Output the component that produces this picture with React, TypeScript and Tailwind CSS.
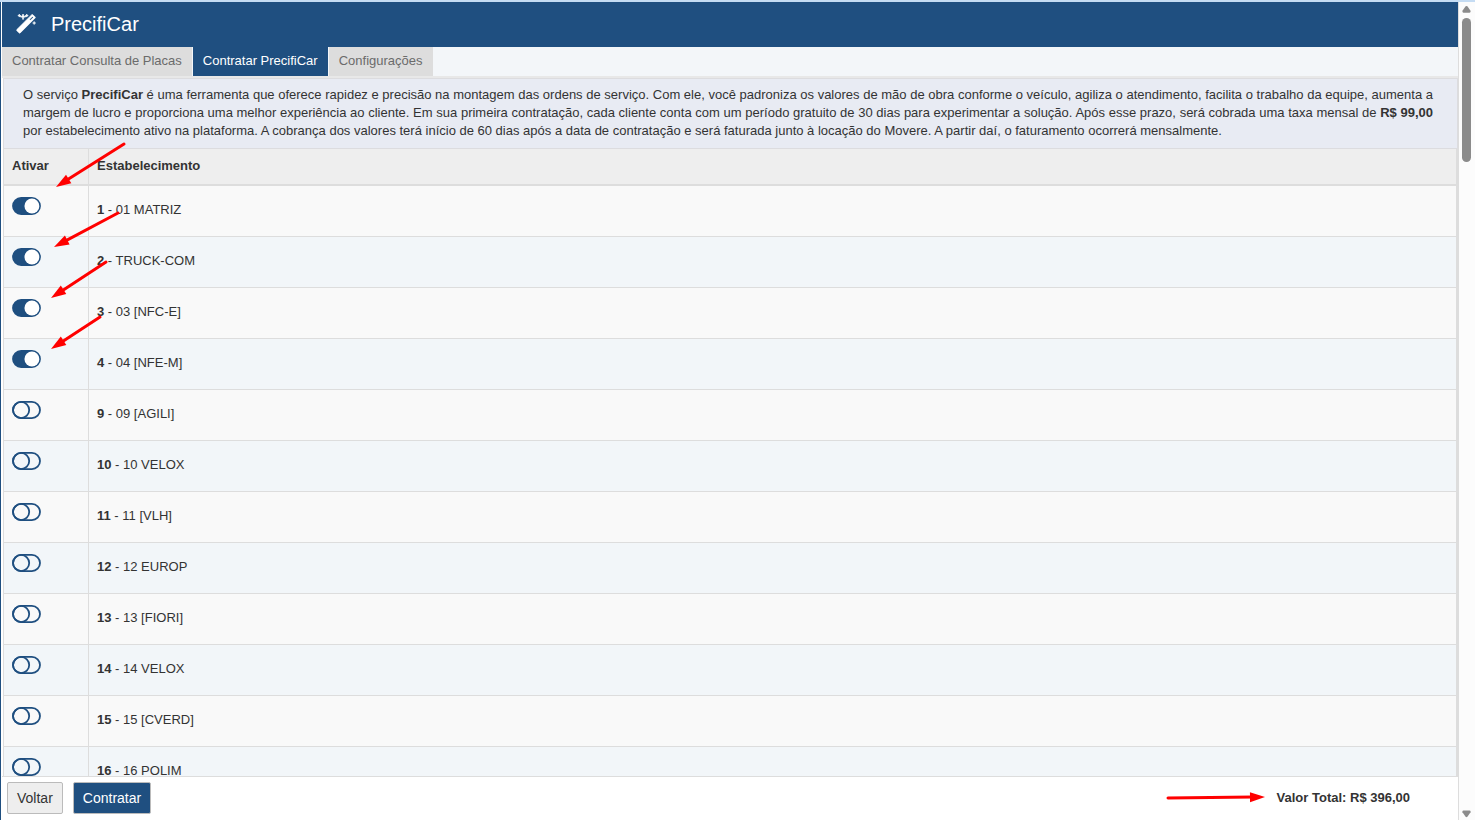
import { useState } from "react";

type Establishment = { id: number; name: string };

const establishments: Establishment[] = [
  { id: 1, name: "01 MATRIZ" },
  { id: 2, name: "TRUCK-COM" },
  { id: 3, name: "03 [NFC-E]" },
  { id: 4, name: "04 [NFE-M]" },
  { id: 9, name: "09 [AGILI]" },
  { id: 10, name: "10 VELOX" },
  { id: 11, name: "11 [VLH]" },
  { id: 12, name: "12 EUROP" },
  { id: 13, name: "13 [FIORI]" },
  { id: 14, name: "14 VELOX" },
  { id: 15, name: "15 [CVERD]" },
  { id: 16, name: "16 POLIM" },
];

const MONTHLY_FEE = 99;

function WandIcon() {
  return (
    <svg viewBox="-30 0 1724 1792" className="h-[21px] w-5 fill-white stroke-white" strokeWidth="60" aria-hidden="true">
      <path
        fillRule="evenodd"
        d="M1220 535l243-243-87-87-243 243zM1637 292q0 27-18 45l-1286 1286q-18 18-45 18t-45-18l-198-198q-18-18-18-45t18-45l1286-1286q18-18 45-18t45 18l198 198q18 18 18 45zM286 98l98 30-98 30-30 98-30-98-98-30 98-30 30-98zM636 160l196 60-196 60-60 196-60-196-196-60 196-60 60-196zM1566 738l98 30-98 30-30 98-30-98-98-30 98-30 30-98zM926 98l98 30-98 30-30 98-30-98-98-30 98-30 30-98z"
      />
    </svg>
  );
}

function ToggleIcon({ on }: { on: boolean }) {
  return (
    <svg viewBox="0 0 2048 1280" className="h-[18px] w-[29px]" aria-hidden="true">
      <rect x="64" y="64" width="1920" height="1152" rx="576" fill={on ? "#1f4f80" : "none"} stroke="#1f4f80" strokeWidth="128" />
      {on ? (
        <circle cx="1408" cy="640" r="530" fill="#ffffff" />
      ) : (
        <circle cx="640" cy="640" r="576" fill="none" stroke="#1f4f80" strokeWidth="128" />
      )}
    </svg>
  );
}

function Arrow({ x1, y1, x2, y2 }: { x1: number; y1: number; x2: number; y2: number }) {
  const length = Math.hypot(x2 - x1, y2 - y1);
  const angle = (Math.atan2(y2 - y1, x2 - x1) * 180) / Math.PI;
  return (
    <g transform={`translate(${x1} ${y1}) rotate(${angle})`}>
      <line x1="0" y1="0" x2={length - 12} y2="0" stroke="#ff0000" strokeWidth="3" strokeLinecap="round" />
      <polygon points={`${length},0 ${length - 15},-5 ${length - 15},5`} fill="#ff0000" />
    </g>
  );
}

export default function App() {
  const [active, setActive] = useState<number[]>([1, 2, 3, 4]);

  const toggle = (id: number) =>
    setActive((ids) => (ids.includes(id) ? ids.filter((i) => i !== id) : [...ids, id]));

  const total = (active.length * MONTHLY_FEE).toFixed(2).replace(".", ",");

  return (
    <div className="relative flex h-screen border-t-2 border-[#c5dcf3] bg-white font-['Liberation_Sans',Arial,sans-serif] text-[13px] text-[#333333]">
      <div className="flex min-w-0 flex-1 flex-col border-r border-l border-r-[#dddddd] border-l-[#1f4f80] pl-px">
        <header className="flex h-[45px] shrink-0 items-center gap-[15px] bg-[#1f4f80] px-3.5 pb-px text-white">
          <WandIcon />
          <h1 className="text-xl leading-6">PrecifiCar</h1>
        </header>

        <nav className="flex h-[29px] shrink-0 gap-px bg-[#f3f6f9] leading-[27px] text-[#6b6b6b]">
          <a href="#placas" className="bg-[#dddddd] px-2.5">Contratar Consulta de Placas</a>
          <a href="#precificar" aria-current="page" className="bg-[#1f4f80] px-2.5 text-white">Contratar PrecifiCar</a>
          <a href="#configuracoes" className="bg-[#dddddd] px-2.5">Configurações</a>
        </nav>

        <main className="flex min-h-0 flex-1 flex-col overflow-hidden border-t-2 border-b border-t-[#e8e8e8] border-b-[#dddddd] pl-px">
          <p className="shrink-0 border border-[#dcdcdf] bg-[#e8ebf3] pt-[7px] pr-6 pb-2 pl-[19px] text-justify leading-[18px]">
            O serviço <b>PrecifiCar</b> é uma ferramenta que oferece rapidez e precisão na montagem das ordens de serviço. Com ele, você padroniza os valores de mão de obra conforme o veículo, agiliza o atendimento, facilita o trabalho da equipe, aumenta a margem de lucro e proporciona uma melhor experiência ao cliente. Em sua primeira contratação, cada cliente conta com um período gratuito de 30 dias para experimentar a solução. Após esse prazo, será cobrada uma taxa mensal de <b>R$ 99,00</b> por estabelecimento ativo na plataforma. A cobrança dos valores terá início de 60 dias após a data de contratação e será faturada junto à locação do Movere. A partir daí, o faturamento ocorrerá mensalmente.
          </p>
          <div className="min-h-0 flex-1 overflow-hidden border-r-2 border-l border-[#dddddd]">
            <table className="w-full table-fixed border-separate border-spacing-0 text-left">
              <thead>
                <tr className="h-[37px] bg-[#eeeeee]">
                  <th scope="col" className="w-[85px] border-r border-b-2 border-[#dddddd] px-2 pb-0.5">Ativar</th>
                  <th scope="col" className="border-b-2 border-[#dddddd] px-2 pb-0.5">Estabelecimento</th>
                </tr>
              </thead>
              <tbody>
                {establishments.map(({ id, name }) => (
                  <tr key={id} className="h-[51px] odd:bg-[#f9f9f9] even:bg-[#f2f6f9]">
                    <td className="border-r border-b border-[#dddddd] px-2 pb-2.5">
                      <label className="flex w-fit cursor-pointer">
                        <input
                          type="checkbox"
                          className="sr-only"
                          aria-label={`Ativar ${name}`}
                          checked={active.includes(id)}
                          onChange={() => toggle(id)}
                        />
                        <ToggleIcon on={active.includes(id)} />
                      </label>
                    </td>
                    <td className="border-b border-[#dddddd] px-2 pb-0.5">
                      <b>{id}</b> - {name}
                    </td>
                  </tr>
                ))}
              </tbody>
            </table>
          </div>
        </main>

        <footer className="flex h-[43px] shrink-0 items-center gap-2.5 pr-12 pb-0.5 pl-[5px]">
          <button type="button" className="h-8 rounded-xs border border-[#bbbbbb] bg-[#eeeeee] px-[9px] text-sm">Voltar</button>
          <button type="button" className="h-8 rounded-xs border border-[#bbbbbb] bg-[#1f4f80] px-[9px] text-sm text-white">Contratar</button>
          <strong className="ml-auto">Valor Total: R$ {total}</strong>
        </footer>
      </div>

      <div className="flex w-4 shrink-0 flex-col items-center justify-between bg-[#fcfcfc] pt-[3px] pr-px pb-0.5" aria-hidden="true">
        <div className="flex flex-col items-center gap-1">
          <svg viewBox="0 0 10 9" className="h-[9px] w-[9px] fill-[#8b8b8b]">
            <path d="M4 1Q5 0 6 1L9.500 6Q10 8 8.500 8H1.500Q0 8 .5 6Z" />
          </svg>
          <div className="h-36 w-[9px] rounded-full bg-[#8b8b8b]" />
        </div>
        <svg viewBox="0 0 10 8" className="h-2 w-[9px] fill-[#8b8b8b]">
          <path d="M4 7Q5 8 6 7L9.500 2Q10 0 8.500 0H1.500Q0 0 .5 2Z" />
        </svg>
      </div>

      <svg className="pointer-events-none absolute -top-0.5 left-0 h-[360px] w-[140px]" aria-hidden="true">
        <Arrow x1={124} y1={144} x2={56} y2={187} />
        <Arrow x1={118} y1={213} x2={54} y2={247} />
        <Arrow x1={106} y1={262} x2={51} y2={298} />
        <Arrow x1={100} y1={317} x2={51} y2={349} />
      </svg>
      <svg className="pointer-events-none absolute right-[209px] bottom-[13px] h-5 w-[101px]" aria-hidden="true">
        <Arrow x1={3} y1={11} x2={100} y2={10} />
      </svg>
    </div>
  );
}
